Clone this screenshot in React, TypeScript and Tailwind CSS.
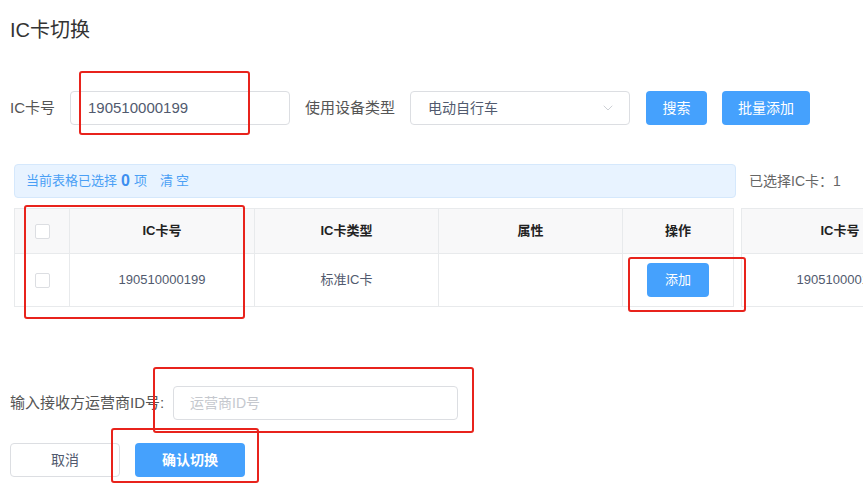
import { ChevronDown } from 'lucide-react';

const font = { fontFamily: '"Liberation Sans", "Noto Sans CJK SC", sans-serif' };

function Checkbox() {
  return <span className="block w-[15px] h-[15px] rounded-[2px] border border-[#dcdee2] bg-white" />;
}

const th = 'h-[45px] border-r border-b border-[#e8eaec] bg-[#f8f8f9] text-[13px] font-bold text-[#222] text-center align-middle';
const td = 'h-[53px] border-r border-b border-[#e8eaec] text-[13px] text-[#515a6e] text-center align-middle';

function Annotation({ className }: { className: string }) {
  return <div className={`absolute border-2 border-[#e8231c] rounded-[3px] pointer-events-none ${className}`} />;
}

export default function App() {
  return (
    <div className="relative w-[863px] h-[492px] overflow-hidden bg-white text-[#515a6e]" style={font}>
      <h1 className="pt-[18px] pl-[10px] text-[20px] leading-[24px] text-[#333]">IC卡切换</h1>

      {/* search row */}
      <div className="mt-[49px] flex items-center pl-[10px]">
        <span className="text-[15px] text-[#555] w-[60px]">IC卡号</span>
        <div className="w-[220px] h-[34px] border border-[#dcdee2] rounded-[4px] flex items-center pl-[17px] text-[15px] text-[#515a6e]">
          190510000199
        </div>
        <span className="ml-[15px] text-[15px] text-[#555] w-[105px]">使用设备类型</span>
        <div className="w-[220px] h-[34px] border border-[#dcdee2] rounded-[4px] flex items-center justify-between pl-[17px] pr-[13px] text-[14px] text-[#515a6e]">
          <span>电动自行车</span>
          <ChevronDown size={16} strokeWidth={1.3} className="text-[#c5c8ce]" />
        </div>
        <button className="ml-[16px] w-[61px] h-[34px] rounded-[4px] bg-[#45a1fd] text-white text-[14px]">搜索</button>
        <button className="ml-[15px] w-[88px] h-[34px] rounded-[4px] bg-[#45a1fd] text-white text-[14px]">批量添加</button>
      </div>

      {/* tables */}
      <div className="mt-[39px] flex">
        <div className="ml-[14px] w-[722px]">
          <div className="h-[34px] rounded-[4px] border border-[#d5e8fc] bg-[#e8f3ff] flex items-center pl-[11px] text-[13px] text-[#4a9ff5]">
            <span>当前表格已选择</span>
            <span className="mx-[4px] text-[16px] font-bold text-[#3d8ff0]">0</span>
            <span>项</span>
            <span className="ml-[13px] tracking-[3px]">清空</span>
          </div>
          <table className="mt-[10px] w-[719px] border-collapse border-l border-t border-[#e8eaec] table-fixed">
            <colgroup>
              <col className="w-[55px]" />
              <col className="w-[185px]" />
              <col className="w-[184px]" />
              <col className="w-[184px]" />
              <col className="w-[111px]" />
            </colgroup>
            <thead>
              <tr>
                <th className={th}>
                  <div className="flex justify-center"><Checkbox /></div>
                </th>
                <th className={th}>IC卡号</th>
                <th className={th}>IC卡类型</th>
                <th className={th}>属性</th>
                <th className={th}>操作</th>
              </tr>
            </thead>
            <tbody>
              <tr>
                <td className={td}>
                  <div className="flex justify-center"><Checkbox /></div>
                </td>
                <td className={td}>190510000199</td>
                <td className={td}>标准IC卡</td>
                <td className={td}></td>
                <td className={td}>
                  <button className="w-[62px] h-[34px] rounded-[4px] bg-[#45a1fd] text-white text-[13px]">添加</button>
                </td>
              </tr>
            </tbody>
          </table>
        </div>

        <div className="ml-[5px] flex-1 min-w-0">
          <div className="h-[34px] flex items-center pl-[8px] text-[14px] text-[#666] whitespace-nowrap">已选择IC卡：1</div>
          <table className="mt-[10px] w-[198px] border-collapse border-l border-t border-[#e8eaec] table-fixed">
            <thead>
              <tr>
                <th className={th}>IC卡号</th>
              </tr>
            </thead>
            <tbody>
              <tr>
                <td className={td}>190510000199</td>
              </tr>
            </tbody>
          </table>
        </div>
      </div>

      {/* operator */}
      <div className="mt-[79px] flex items-center pl-[10px]">
        <span className="text-[15px] text-[#555] w-[163px] whitespace-nowrap">输入接收方运营商ID号:</span>
        <div className="w-[285px] h-[34px] border border-[#dcdee2] rounded-[4px] flex items-center pl-[16px] text-[14px] text-[#c5c8ce]">
          运营商ID号
        </div>
      </div>

      <div className="mt-[23px] flex pl-[10px] gap-[15px]">
        <button className="w-[110px] h-[34px] rounded-[4px] border border-[#dcdee2] bg-white text-[14px] text-[#515a6e]">取消</button>
        <button className="w-[110px] h-[34px] rounded-[4px] bg-[#45a1fd] text-white text-[14px] font-bold">确认切换</button>
      </div>

      {/* red annotation boxes */}
      <Annotation className="left-[79px] top-[71px] w-[171px] h-[64px]" />
      <Annotation className="left-[24px] top-[205px] w-[221px] h-[114px]" />
      <Annotation className="left-[628px] top-[257px] w-[118px] h-[55px]" />
      <Annotation className="left-[153px] top-[367px] w-[321px] h-[66px]" />
      <Annotation className="left-[111px] top-[428px] w-[148px] h-[55px]" />
    </div>
  );
}
